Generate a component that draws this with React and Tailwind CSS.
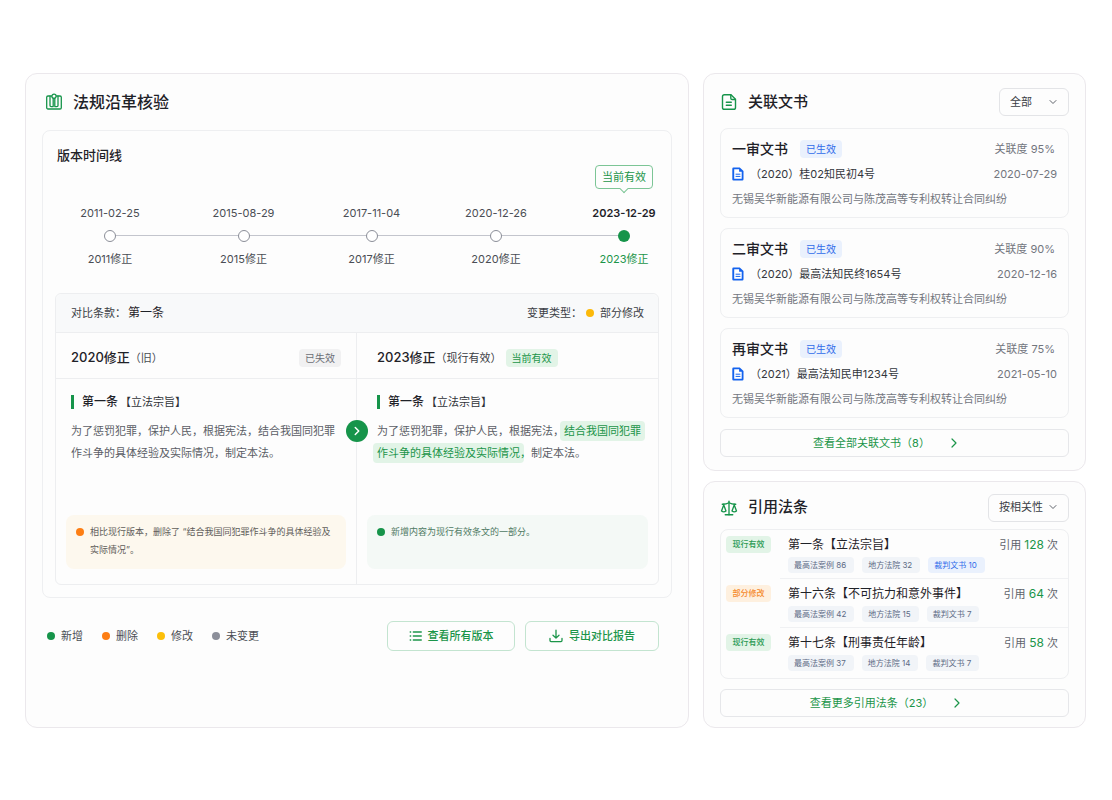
import React, { useState } from "react";
import { ChevronDown, ChevronRight, Scale } from "lucide-react";
import clsx from "clsx";

// "grow" is the share of free space in front of the node
const versions = [
  { date: "2011-02-25", label: "2011修正" },
  { date: "2015-08-29", label: "2015修正", grow: "grow-[139]" },
  { date: "2017-11-04", label: "2017修正", grow: "grow-[128]" },
  { date: "2020-12-26", label: "2020修正", grow: "grow-[121]" },
  { date: "2023-12-29", label: "2023修正", grow: "grow-[128]", current: true },
];

const legend = [
  { label: "新增", color: "bg-[#16944a]" },
  { label: "删除", color: "bg-[#fd7e14]" },
  { label: "修改", color: "bg-[#fcbf0a]" },
  { label: "未变更", color: "bg-[#8c8f9a]" },
];

const documents = [
  {
    id: 1,
    stage: "一审文书",
    caseNo: "（2020）桂02知民初4号",
    relevance: "95%",
    date: "2020-07-29",
  },
  {
    id: 2,
    stage: "二审文书",
    caseNo: "（2020）最高法知民终1654号",
    relevance: "90%",
    date: "2020-12-16",
  },
  {
    id: 3,
    stage: "再审文书",
    caseNo: "（2021）最高法知民申1234号",
    relevance: "75%",
    date: "2021-05-10",
  },
];

const citations = [
  {
    name: "第一条【立法宗旨】",
    status: "现行有效",
    count: 128,
    tags: [
      { text: "最高法案例 86" },
      { text: "地方法院 32" },
      { text: "裁判文书 10", active: true },
    ],
  },
  {
    name: "第十六条【不可抗力和意外事件】",
    status: "部分修改",
    count: 64,
    tags: [
      { text: "最高法案例 42" },
      { text: "地方法院 15" },
      { text: "裁判文书 7" },
    ],
  },
  {
    name: "第十七条【刑事责任年龄】",
    status: "现行有效",
    count: 58,
    tags: [
      { text: "最高法案例 37" },
      { text: "地方法院 14" },
      { text: "裁判文书 7" },
    ],
  },
];

const BookIcon = () => (
  <svg
    viewBox="0 0 18 18"
    className="h-[18px] w-[18px] shrink-0 text-[#16944a]"
    fill="none"
    stroke="currentColor"
    strokeWidth="1.3"
    strokeLinecap="round"
    strokeLinejoin="round"
  >
    <path d="M6.4 3H3a1.300 1.300 0 0 0-1.300 1.300v10.400A1.300 1.300 0 0 0 3 16h12a1.300 1.300 0 0 0 1.300-1.300V4.300A1.300 1.300 0 0 0 15 3h-3.400" />
    <path d="M5 3.200v9.300c0 .7.4 1.100 1.100 1.100h2.100V5.400" />
    <path d="M13 3.200v9.300c0 .7-.4 1.100-1.100 1.100H9.800V5.400" />
    <circle cx="9" cy="3.200" r="2.100" />
  </svg>
);

const FileIcon = () => (
  <svg
    viewBox="0 0 18 18"
    className="h-[18px] w-[18px] shrink-0 text-[#16944a]"
    fill="none"
    stroke="currentColor"
    strokeWidth="1.4"
    strokeLinecap="round"
    strokeLinejoin="round"
  >
    <path d="M11 1.700H4.400A1.900 1.900 0 0 0 2.500 3.600v10.800a1.900 1.900 0 0 0 1.900 1.900h9.200a1.900 1.900 0 0 0 1.900-1.900V6.200L11 1.700Z" />
    <path d="M10.800 2v3.200c0 .8.5 1.300 1.300 1.300h3.200" />
    <path d="M6.300 9.300h5M6.300 12.200h5" />
  </svg>
);

const DocBadgeIcon = () => (
  <svg viewBox="0 0 12 14" className="h-3.5 w-3 shrink-0">
    <path
      d="M1.500.5h6.300L11.500 4v8.300a1.200 1.200 0 0 1-1.200 1.200H1.500A1.200 1.200 0 0 1 .3 12.300V1.700A1.200 1.200 0 0 1 1.500.5Z"
      fill="#1463ee"
    />
    <path d="M2.200 2.300h4.900v2.400h2.600v7H2.200Z" fill="#fff" />
    <path d="M3.600 7.200h4.800M3.600 9.400h4.800" stroke="#1463ee" strokeWidth="1" />
  </svg>
);

const ListIcon = () => (
  <svg
    viewBox="0 0 13 12"
    className="h-3 w-[13px] shrink-0"
    fill="none"
    stroke="currentColor"
    strokeWidth="1.300"
    strokeLinecap="round"
  >
    <path d="M4.300 2h8M4.300 6h8M4.300 10h8" />
    <path d="M1.200 2h.5M1.200 6h.5M1.200 10h.5" />
  </svg>
);

const ExportIcon = () => (
  <svg
    viewBox="0 0 14 14"
    className="h-3.5 w-3.5 shrink-0"
    fill="none"
    stroke="currentColor"
    strokeWidth="1.300"
    strokeLinecap="round"
    strokeLinejoin="round"
  >
    <path d="M7 1.200v7.600M4 6.200l3 2.900 3-2.900" />
    <path d="M1 9.500v2.100a1 1 0 0 0 1 1h10a1 1 0 0 0 1-1V9.500" />
  </svg>
);

const Dot = ({ color }) => (
  <span className={clsx("h-2 w-2 shrink-0 rounded-full", color)} />
);

const Panel = ({ className, children }) => (
  <section
    className={clsx(
      "rounded-xl border border-[#ebe8ec] bg-[#fdfdfd] px-4",
      className
    )}
  >
    {children}
  </section>
);

const Select = ({ label, value, onChange, options, className }) => (
  <div className="relative">
    <select
      aria-label={label}
      value={value}
      onChange={(e) => onChange(e.target.value)}
      className={clsx(
        "h-7 appearance-none rounded-md border border-[#e3e4e7] bg-transparent pl-2.5 text-[11px] text-[#3b3e45]",
        className
      )}
    >
      {options.map((option) => (
        <option key={option}>{option}</option>
      ))}
    </select>
    <ChevronDown
      className="pointer-events-none absolute top-2 right-2.5 h-3 w-3 text-[#5f636b]"
      strokeWidth={2}
    />
  </div>
);

const MoreButton = ({ children }) => (
  <button
    type="button"
    className="flex h-7 w-full items-center justify-center gap-4 rounded-md border border-[#e6e7ea] pr-3.5 text-[11px] text-[#1b9549]"
  >
    {children}
    <ChevronRight className="h-4 w-4" strokeWidth={1.8} />
  </button>
);

const ArticleTitle = () => (
  <h4 className="flex h-4 items-center gap-0.5 text-[11px] text-[#2f3238]">
    <span className="mr-1.5 h-3.5 w-[3px] bg-[#16944a]" />
    <span className="text-xs font-medium text-[#1f2228]">第一条</span>
    【立法宗旨】
  </h4>
);

const Timeline = () => (
  <ol className="relative mt-[38px] flex pr-[3px] pl-[23px]">
    <li
      aria-hidden="true"
      className="absolute top-[30px] right-9 left-14 h-px bg-[#c3c5cd]"
    />
    {versions.map(({ date, label, grow, current }) => (
      <React.Fragment key={date}>
        {grow && <li aria-hidden="true" className={clsx("basis-0", grow)} />}
        <li
          className={clsx(
            "relative flex w-16 flex-col items-center gap-[9px] text-[11px] leading-4 whitespace-nowrap",
            current ? "text-[#1b9549]" : "text-[#4a4d54]"
          )}
        >
          {current && (
            <div className="absolute bottom-full mb-4 rounded border border-[#7cc596] bg-[#fdfdfd] px-1.5 py-[3px]">
              当前有效
              <span className="absolute -bottom-[4px] left-1/2 -ml-[3px] h-1.5 w-1.5 rotate-45 border-r border-b border-[#7cc596] bg-[#fdfdfd]" />
            </div>
          )}
          <span className={clsx(current && "font-semibold text-[#1f2228]")}>
            {date}
          </span>
          <span
            className={clsx(
              "h-3 w-3 rounded-full",
              current
                ? "bg-[#16944a]"
                : "border-[1.5px] border-[#8b8e98] bg-white"
            )}
          />
          <span>{label}</span>
        </li>
      </React.Fragment>
    ))}
  </ol>
);

const Note = ({ className, dot, children }) => (
  <div
    className={clsx(
      "mx-2.5 mt-auto mb-[15px] flex min-h-[54px] gap-1.5 rounded-lg px-2.5 py-2 text-[9px] leading-[18px]",
      className
    )}
  >
    <span className="flex h-[18px] items-center">
      <Dot color={dot} />
    </span>
    <p>{children}</p>
  </div>
);

const Comparison = () => (
  <div className="relative mt-[26px] rounded-md border border-[#edeef0]">
    <div className="flex h-[39px] items-center justify-between rounded-t-md border-b border-[#edeef0] bg-[#f8f9fa] pr-3.5 pl-[15px] text-[11px] text-[#3b3e45]">
      <div className="flex items-center gap-0.5">
        对比条款：
        <span className="text-xs text-[#1f2228]">第一条</span>
      </div>
      <div className="flex items-center gap-1">
        变更类型：
        <Dot color="bg-[#fcb90a]" />
        <span className="ml-0.5">部分修改</span>
      </div>
    </div>

    <div className="relative grid grid-cols-2">
      {/* Old version */}
      <div className="flex flex-col border-r border-[#edeef0]">
        <div className="flex h-[46px] items-center justify-between border-b border-[#edeef0] px-[15px] pt-1">
          <h3 className="text-[11px] text-[#4a4d54]">
            <span className="text-[13px] font-medium text-[#1f2228]">
              2020修正
            </span>
            （旧）
          </h3>
          <span className="rounded bg-[#f1f1f2] px-1.5 text-[10px] leading-[18px] text-[#6b6e75]">
            已失效
          </span>
        </div>
        <div className="px-[15px] pt-[15px] pb-[51px]">
          <ArticleTitle />
          <p className="mt-2.5 text-[11px] leading-[22px] text-[#5b5e66]">
            为了惩罚犯罪，保护人民，根据宪法，结合我国同犯罪作斗争的具体经验及实际情况，制定本法。
          </p>
        </div>
        <Note className="bg-[#fdf8ee] text-[#5f5d5a]" dot="bg-[#fd7e14]">
          相比现行版本，删除了 “结合我国同犯罪作斗争的具体经验及实际情况”。
        </Note>
      </div>

      {/* Current version */}
      <div className="flex flex-col">
        <div className="flex h-[46px] items-center gap-1 border-b border-[#edeef0] pt-1 pl-5">
          <h3 className="text-[11px] text-[#3b3e45]">
            <span className="text-[13px] font-medium text-[#1f2228]">
              2023修正
            </span>
            （现行有效）
          </h3>
          <span className="rounded bg-[#e2f4e7] px-1.5 text-[10px] leading-[18px] text-[#1b9549]">
            当前有效
          </span>
        </div>
        <div className="pt-[15px] pr-2.5 pb-[51px] pl-5">
          <ArticleTitle />
          <p className="mt-2.5 text-[11px] leading-[22px] text-[#5b5e66]">
            为了惩罚犯罪，保护人民，根据宪法，
            <mark className="-mx-1 rounded bg-[#e2f4e7] px-1 py-[3px] text-[#1b9549]">
              结合我国同犯罪
            </mark>
            <br />
            <mark className="-mx-1 rounded bg-[#e2f4e7] px-1 py-[3px] text-[#1b9549]">
              作斗争的具体经验及实际情况
            </mark>
            <span className="text-[#1b9549]">，</span>
            制定本法。
          </p>
        </div>
        <Note className="bg-[#f4f9f6] text-[#4f7a64]" dot="bg-[#16944a]">
          新增内容为现行有效条文的一部分。
        </Note>
      </div>

      <button
        type="button"
        aria-label="切换对比"
        className="absolute top-[87px] left-1/2 flex h-[22px] w-[22px] -translate-x-1/2 items-center justify-center rounded-full bg-[#16944a] text-white"
      >
        <ChevronRight className="h-3.5 w-3.5" strokeWidth={2.5} />
      </button>
    </div>
  </div>
);

const HistoryPanel = () => (
  <Panel>
    <div className="flex h-14 items-center gap-2.5 pl-[3px]">
      <BookIcon />
      <h1 className="text-base font-medium text-[#1f2228]">法规沿革核验</h1>
    </div>

    <div className="rounded-lg border border-[#eeeff1] p-3">
      <h2 className="pl-0.5 text-[13px] leading-6 font-medium text-[#1f2228]">
        版本时间线
      </h2>
      <Timeline />
      <Comparison />
    </div>

    <div className="mt-[23px] mb-4 flex items-center justify-between pr-[13px] pl-[5px]">
      <ul className="flex gap-[19px] text-[11px] text-[#4a4d54]">
        {legend.map(({ label, color }) => (
          <li key={label} className="flex items-center gap-1.5">
            <Dot color={color} />
            {label}
          </li>
        ))}
      </ul>
      <div className="flex gap-2.5 text-[11px] font-medium text-[#1b9549]">
        <button
          type="button"
          className="flex h-[30px] w-32 items-center justify-center gap-1.5 rounded-md border border-[#c3e4d0]"
        >
          <ListIcon />
          查看所有版本
        </button>
        <button
          type="button"
          className="flex h-[30px] w-[134px] items-center justify-center gap-1.5 rounded-md border border-[#c3e4d0]"
        >
          <ExportIcon />
          导出对比报告
        </button>
      </div>
    </div>
  </Panel>
);

const DocumentsPanel = () => {
  const [filter, setFilter] = useState("全部");

  return (
    <Panel className="pb-[13px]">
      <div className="flex h-[54px] items-center gap-2.5 pt-0.5">
        <FileIcon />
        <h2 className="flex-1 text-[15px] font-medium text-[#1f2228]">
          关联文书
        </h2>
        <Select
          label="文书筛选"
          value={filter}
          onChange={setFilter}
          options={["全部", "一审", "二审", "再审"]}
          className="w-[70px]"
        />
      </div>

      <ul className="mb-[11px] flex flex-col gap-2.5">
        {documents.map((doc) => (
          <li
            key={doc.id}
            className="flex flex-col gap-[5px] rounded-lg border border-[#eeeff1] px-[11px] pt-2.5 pb-2 text-[11px] leading-5 text-[#73767d]"
          >
            <div className="flex items-center pr-0.5">
              <h3 className="text-sm leading-5 font-medium text-[#1f2228]">
                {doc.stage}
              </h3>
              <span className="ml-3 rounded bg-[#eaf1fd] px-1.5 text-[10px] leading-[18px] text-[#2f6bea]">
                已生效
              </span>
              <span className="ml-auto">关联度 {doc.relevance}</span>
            </div>
            <div className="flex items-center gap-1.5">
              <DocBadgeIcon />
              <a href="#" className="text-[#33363c]">
                {doc.caseNo}
              </a>
              <span className="ml-auto">{doc.date}</span>
            </div>
            <p>无锡吴华新能源有限公司与陈茂高等专利权转让合同纠纷</p>
          </li>
        ))}
      </ul>

      <MoreButton>查看全部关联文书（8）</MoreButton>
    </Panel>
  );
};

const CitationsPanel = () => {
  const [sort, setSort] = useState("按相关性");

  return (
    <Panel className="pb-2.5">
      <div className="flex h-[47px] items-center gap-2.5 pt-1">
        <Scale
          className="h-[18px] w-[18px] shrink-0 text-[#16944a]"
          strokeWidth={1.8}
        />
        <h2 className="flex-1 text-[15px] font-medium text-[#1f2228]">
          引用法条
        </h2>
        <Select
          label="排序方式"
          value={sort}
          onChange={setSort}
          options={["按相关性", "按引用数"]}
          className="w-[81px]"
        />
      </div>

      <ul className="mb-2.5 rounded-lg border border-[#eeeff1] pb-0.5">
        {citations.map((item) => (
          <li key={item.name} className="group flex pl-[5px]">
            <div className="w-[54px] pt-1.5">
              <span
                className={clsx(
                  "block w-[45px] rounded text-center text-[8px] leading-[17px] font-medium",
                  item.status === "部分修改"
                    ? "bg-[#fef0df] text-[#f58a2c]"
                    : "bg-[#e2f4e7] text-[#2a9a54]"
                )}
              >
                {item.status}
              </span>
            </div>
            <div className="flex-1 border-b border-[#f0f1f3] pt-[7px] pr-2.5 pb-[5px] pl-2 group-last:border-b-0">
              <div className="flex items-center justify-between text-[11px] leading-4 text-[#5f636b]">
                <h3 className="text-xs leading-4 text-[#1f2228]">
                  {item.name}
                </h3>
                <span>
                  引用{" "}
                  <span className="text-xs leading-4 text-[#1b9549]">
                    {item.count}
                  </span>{" "}
                  次
                </span>
              </div>
              <div className="mt-1 flex gap-2">
                {item.tags.map((tag) => (
                  <span
                    key={tag.text}
                    className={clsx(
                      "rounded pr-2 pl-1.5 text-[8px] leading-4",
                      tag.active
                        ? "bg-[#eaf1fd] text-[#2f6bea]"
                        : "bg-[#f1f4f8] text-[#5d6b85]"
                    )}
                  >
                    {tag.text}
                  </span>
                ))}
              </div>
            </div>
          </li>
        ))}
      </ul>

      <MoreButton>查看更多引用法条（23）</MoreButton>
    </Panel>
  );
};

const App = () => {
  return (
    <div
      lang="zh-CN"
      className="min-h-screen bg-white pt-[73px] pr-[26px] pb-6 pl-[25px] font-['Inter','Noto_Sans_CJK_SC',sans-serif]"
    >
      <main className="grid grid-cols-[minmax(0,1fr)_383px] gap-3.5">
        <HistoryPanel />
        <div className="flex flex-col gap-2.5">
          <DocumentsPanel />
          <CitationsPanel />
        </div>
      </main>
    </div>
  );
};

export default App;
